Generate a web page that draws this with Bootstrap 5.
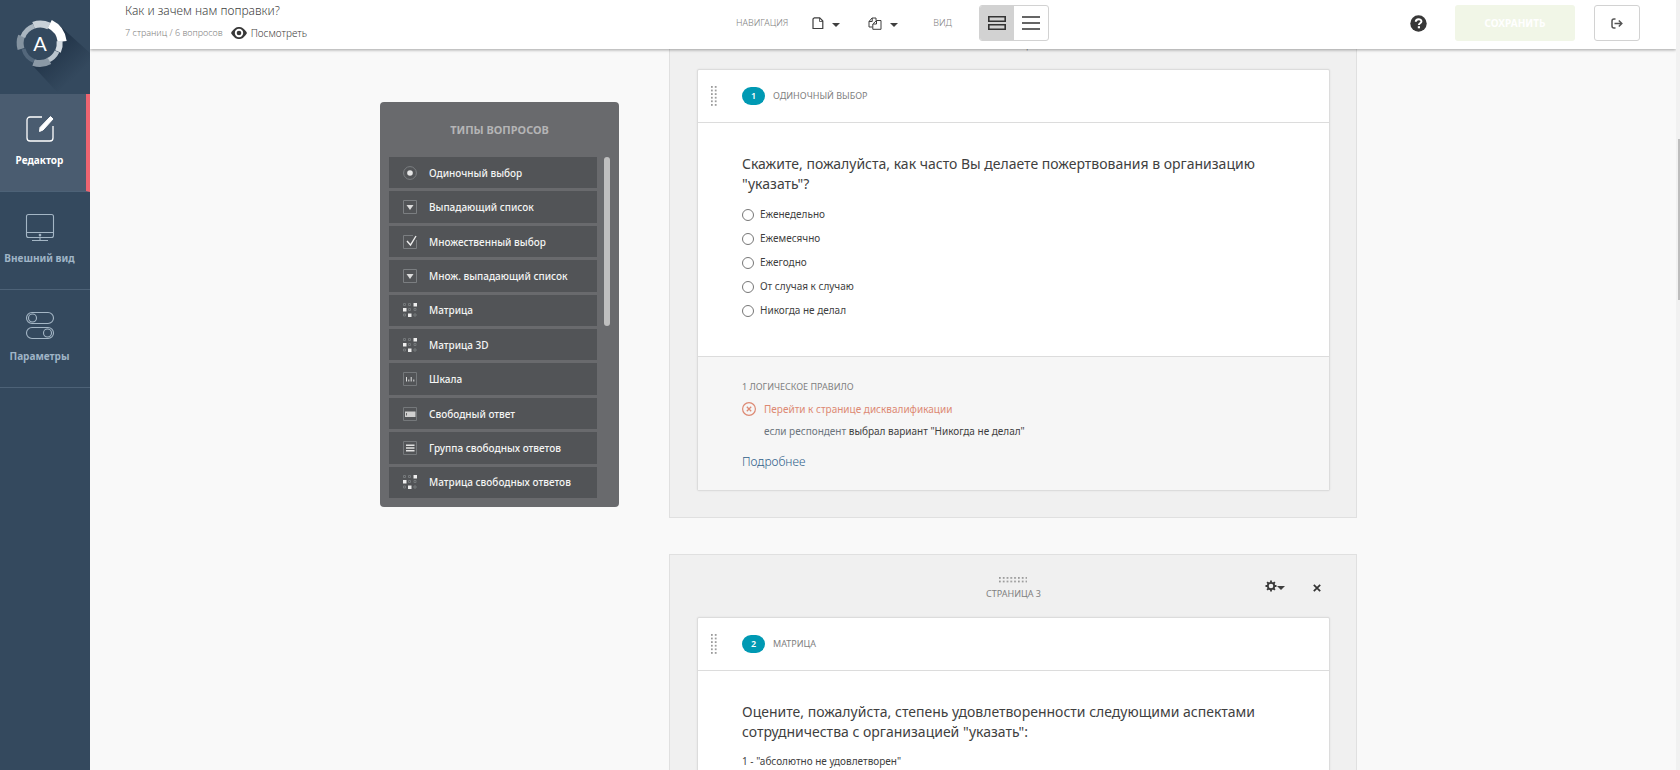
<!DOCTYPE html>
<html lang="ru">
<head>
<meta charset="utf-8">
<meta name="viewport" content="width=device-width, initial-scale=1">
<title>Как и зачем нам поправки?</title>
<link href="https://cdn.jsdelivr.net/npm/bootstrap@5.3.0/dist/css/bootstrap.min.css" rel="stylesheet">
<script src="https://cdn.jsdelivr.net/npm/bootstrap@5.3.0/dist/js/bootstrap.bundle.min.js"></script>
<style>
  :root { --ink: #3f3f3f; --muted: #808080; --navy: #34495e; --edge: #dcdcdc; }
  body { font-family: "Noto Sans", "Open Sans", sans-serif; font-size: 10px; line-height: 14px; color: var(--ink); background: #f9f9f9; }
  svg { display: block; flex-shrink: 0; }
  .caps { font-size: 9px; color: var(--muted); }

  /* sidebar */
  .sidebar { width: 90px; background: var(--navy); }
  .brand { height: 94px; }
  .side-link { height: 98px; padding: 21px 11px 0 0; color: #9fb4c6; font-weight: 700; border-bottom: 1px solid #4d6277; }
  .side-link svg { margin-bottom: 8px; }
  .side-link.active { color: #fff; background: #4a5c70; border-right: 4px solid #ee6470; padding-right: 7px; }

  /* top bar */
  .topbar { display: grid; grid-template-columns: 1fr auto 1fr; height: 49px; padding: 0 36px 3px 35px; background: #fff; box-shadow: 0 1px 3px rgba(0,0,0,.35); z-index: 5; }
  .doc-title { font-size: 12px; font-weight: 300; line-height: 22px; margin: 0 0 4px; }
  .preview { color: var(--ink); font-weight: 300; }
  .tools { padding-left: 20px; }
  .icon-btn { background: none; border: 0; padding: 0; color: var(--ink); }
  .caret-down { width: 7px; border: solid transparent; border-width: 4px 4px 0; border-top-color: currentColor; }
  .view-label { margin: 0 27px 0 35px; }
  .view-toggle { border: 1px solid #d2d2d2; border-radius: 3px; overflow: hidden; }
  .view-toggle .icon-btn { width: 34px; height: 34px; }
  .view-toggle .icon-btn.active { background: #d2d2d2; }
  .save-btn { width: 120px; height: 36px; margin-right: 19px; font-size: 10px; font-weight: 700; border: 0; border-radius: 3px; --bs-btn-color: #fff; --bs-btn-bg: #f1f6e7; --bs-btn-disabled-color: #fff; --bs-btn-disabled-bg: #f1f6e7; --bs-btn-disabled-opacity: 1; }
  .exit-btn { width: 46px; height: 36px; border: 1px solid #d2d2d2; border-radius: 3px; background: #fff; }

  /* workspace */
  .workspace { width: 977px; max-width: 100%; margin-right: 319px; margin-left: auto; }
  .palette { width: 239px; height: 405px; margin-top: 53px; padding: 0 9px 9px; background: #696a6d; border-radius: 4px; color: #fff; }
  .palette h2 { height: 55px; line-height: 55px; font-size: 11px; font-weight: 700; color: #b4b4b5; margin: 0; }
  .type-list { height: 341px; overflow: hidden; flex-grow: 1; gap: 3px; }
  .type-item { flex: 1 0 0; background: #525457; border: 0; color: #f4f4f4; font-weight: 500; text-align: left; padding: 0 0 0 13px; gap: 11px; }
  .thumb { width: 6px; height: 169px; border-radius: 3px; background: #bfbfbf; margin-left: 7px; }

  /* survey pages */
  .survey { width: 688px; }
  .survey-page { background: #f0f0f0; border: 1px solid #e0e0e0; padding: 0 26px 26px 27px; margin-bottom: 36px; }
  .survey-page:first-child { margin-top: -43px; }
  .page-head { display: grid; grid-template-columns: 1fr auto 1fr; height: 62px; padding: 22px 9px 0; }
  .page-actions { padding-top: 3px; }
  .question { background: #fff; border: 1px solid var(--edge); border-radius: 2px; box-shadow: 0 0 2px rgba(0,0,0,.08); }
  .question-head { height: 53px; padding: 0 13px; border-bottom: 1px solid var(--edge); }
  .number-pill { width: 23px; height: 18px; line-height: 18px; margin-left: 25px; margin-right: 8px; border-radius: 9px; background: #0099b3; color: #fff; font-size: 9px; font-weight: 600; text-align: center; }
  .question-body { padding: 31px 44px 0; }
  .question-title { font-size: 14px; line-height: 20px; font-weight: 400; margin: 0 0 8px; }
  .choice { height: 24px; gap: 6px; }
  .choice input { appearance: none; width: 12px; height: 12px; margin: 2px 0 0; border: 1px solid #777; border-radius: 50%; background: #fff; }
  .rules { background: #f6f6f6; border-top: 1px solid var(--edge); padding: 23px 44px 20px; margin-top: 34px; }
  .warn { color: #dd8973; }
  .more { font-size: 12px; line-height: 16px; font-weight: 300; color: #2f5f8a; }

  .scroll-rail { width: 4px; padding-top: 139px; background: #f1f1f1; }
  .scroll-rail div { height: 161px; margin-left: 2px; background: #bdbdbd; }
</style>
</head>
<body>
<svg class="position-absolute" width="0" height="0" aria-hidden="true">
  <symbol id="i-radio" viewBox="0 0 14 14"><circle cx="7" cy="7" r="6.4" fill="none" stroke="#7b7e81"/><circle cx="7" cy="7" r="2.8" fill="#e6e6e6"/></symbol>
  <symbol id="i-drop" viewBox="0 0 14 14"><path d="M.5.5h13v13H.5z" fill="none" stroke="#7b7e81"/><path d="M3.5 5h7L7 10z" fill="#dcdcdc"/></symbol>
  <symbol id="i-check" viewBox="0 0 14 14"><path d="M10 .5H.5v13h13V5" fill="none" stroke="#7b7e81"/><path d="M4 6l3.500 4L13 1" fill="none" stroke="#eee" stroke-width="1.400"/></symbol>
  <symbol id="i-matrix" viewBox="0 0 14 14"><path d="M.5.5h2v2h-2zM5.500.5h2v2h-2zM5.500 5.500h2v2h-2zM11 5.500h2v2h-2zM.5 11h2v2h-2zM11 11h2v2h-2z" fill="none" stroke="#75787b"/><path d="M10.500 0H14v3.500h-3.500zM0 5h3.500v3.500H0zM5 10.500h3.500V14H5z" fill="#eee"/></symbol>
  <symbol id="i-scale" viewBox="0 0 14 14"><path d="M.5.5h13v13H.5z" fill="none" stroke="#75787b"/><path d="M3.500 5v4.500M5.800 7.500v2M8.200 5v4.500M10.800 7.500v2" stroke="#ddd"/></symbol>
  <symbol id="i-field" viewBox="0 0 14 14"><path d="M.5.5h13v13H.5z" fill="none" stroke="#75787b"/><path d="M2 4.500h10.500v5.500H2z" fill="#cfcfcf"/><path d="M3.500 6v2.500" stroke="#666"/></symbol>
  <symbol id="i-lines" viewBox="0 0 14 14"><path d="M.5.5h13v13H.5z" fill="none" stroke="#75787b"/><path d="M3 4.200h8.500M3 7h8.500M3 9.800h8.500" stroke="#e2e2e2" stroke-width="1.600"/></symbol>
  <pattern id="dots" width="3.8" height="3.6" patternUnits="userSpaceOnUse"><path d="M0 0h1.700v1.700H0z" fill="#999"/></pattern>
</svg>

<div class="d-flex vh-100 overflow-hidden">
  <nav class="sidebar flex-shrink-0" aria-label="Разделы">
    <a class="brand d-block" href="#" aria-label="На главную">
      <svg width="90" height="93" viewBox="0 0 90 93">
        <defs><linearGradient id="shade" x1="40" y1="44" x2="72" y2="80" gradientUnits="userSpaceOnUse"><stop offset="0" stop-color="#1e3044"/><stop offset="1" stop-color="#34495e"/></linearGradient></defs>
        <path d="M60 26l30 27v40H58L33 66z" fill="url(#shade)"/>
        <circle cx="40" cy="44" r="18" fill="#34495e"/>
        <g fill="none">
          <path d="M33.500 25.200A20 20 0 0 1 49 26" stroke="#c9d1d8" stroke-width="7"/>
          <path d="M49.800 24A22.300 22.300 0 0 1 62.200 41.500" stroke="#fff" stroke-width="9"/>
          <path d="M59.600 41A19.500 19.500 0 0 1 58 51.500" stroke="#d5dce2" stroke-width="6"/>
          <path d="M57 51.500A18 18 0 0 1 47.500 60.500" stroke="#b9c4cd" stroke-width="5"/>
          <path d="M49.500 61A20 20 0 0 1 33.500 62.500" stroke="#8b99a6" stroke-width="7"/>
          <path d="M34 61A18 18 0 0 1 23.500 49" stroke="#53677b" stroke-width="4"/>
          <path d="M21 49A20 20 0 0 1 21.500 36" stroke="#8493a0" stroke-width="7"/>
          <path d="M22.800 37A18.500 18.500 0 0 1 34 26.200" stroke="#aab6c0" stroke-width="5"/>
        </g>
        <text x="40" y="51" text-anchor="middle" font-family="Lato, sans-serif" font-size="20" fill="#fff">A</text>
      </svg>
    </a>
    <a class="side-link active d-flex flex-column align-items-center text-decoration-none" href="#">
      <svg width="30" height="30" viewBox="0 0 30 30"><path d="M17 2H5a3 3 0 0 0-3 3v18a3 3 0 0 0 3 3h20a3 3 0 0 0 3-3V11" fill="none" stroke="#fff" stroke-width="1.300"/><path d="M15 12.500L25.500 1.500l2.500 2.500L18 15l-3.500 1.500z" fill="#fff" stroke="#fff" stroke-linejoin="round"/></svg>
      Редактор
    </a>
    <a class="side-link d-flex flex-column align-items-center text-decoration-none text-nowrap" href="#">
      <svg width="30" height="30" viewBox="0 0 30 30"><g fill="none" stroke="#a4b6c5" stroke-width="1.100"><rect x="1.500" y="1.500" width="27" height="23" rx="2"/><path d="M1.500 19.500h27M15 23.500v3.500M7 27.500h16"/></g><circle cx="15" cy="22" r="1.300" fill="#a4b6c5"/></svg>
      Внешний вид
    </a>
    <a class="side-link d-flex flex-column align-items-center text-decoration-none" href="#">
      <svg width="30" height="30" viewBox="0 0 30 30"><g fill="none" stroke="#a4b6c5" stroke-width="1.100"><rect x="1.500" y="1.500" width="27" height="11" rx="5.500"/><circle cx="7.500" cy="7" r="4"/><rect x="1.500" y="16.500" width="27" height="11" rx="5.500"/><circle cx="22.500" cy="22" r="4"/></g></svg>
      Параметры
    </a>
  </nav>

  <div class="d-flex flex-column flex-grow-1 overflow-hidden">
    <header class="topbar position-relative flex-shrink-0">
      <div>
        <h1 class="doc-title">Как и зачем нам поправки?</h1>
        <div class="d-flex align-items-center">
          <span class="caps fw-light">7 страниц / 6 вопросов</span>
          <a class="preview d-flex align-items-center text-decoration-none ms-1" href="#">
            <svg class="mx-1" width="16" height="14" viewBox="0 0 16 14"><path d="M0 7C3 2 5.500 1 8 1s5 1 8 6c-3 5-5.500 6-8 6S3 12 0 7z" fill="#383838"/><circle cx="8" cy="7" r="4.200" fill="#fff"/><circle cx="8" cy="7" r="2.300" fill="#383838"/></svg>
            Посмотреть
          </a>
        </div>
      </div>
      <div class="tools d-flex align-items-center">
        <span class="caps fw-light">НАВИГАЦИЯ</span>
        <button class="icon-btn d-flex align-items-center ms-4" aria-label="Страница">
          <svg width="12" height="13" viewBox="0 0 12 13"><path d="M2.200.8h5.600L10.800 4v7.500H1V2z" fill="none" stroke="#3f3f3f" stroke-width="1.200" stroke-linejoin="round"/><path d="M7.500 1v3.500H11" fill="none" stroke="#3f3f3f" stroke-width=".8"/></svg>
          <span class="caret-down ms-2 mt-1"></span>
        </button>
        <button class="icon-btn d-flex align-items-center ms-4" aria-label="Копировать">
          <svg class="ms-1" width="14" height="13" viewBox="0 0 14 13"><g fill="none" stroke="#3f3f3f" stroke-linejoin="round"><path d="M4.500 10H1V4.500L4 1h4v2.500"/><path d="M4.200 1v3.500H1"/><path d="M4.800 12.300V7L8.500 3.500H13v8.800z"/><path d="M8.500 3.500V7H5"/></g></svg>
          <span class="caret-down ms-2 mt-1"></span>
        </button>
        <span class="caps fw-light view-label">ВИД</span>
        <div class="view-toggle d-flex" role="group" aria-label="Вид">
          <button class="icon-btn active d-flex align-items-center justify-content-center" aria-label="Подробный"><svg width="18" height="14" viewBox="0 0 18 14"><path d="M.8.8h16.400v4.400H.8zM.8 8.800h16.400v4.400H.8z" fill="none" stroke="#333" stroke-width="1.600"/></svg></button>
          <button class="icon-btn d-flex align-items-center justify-content-center" aria-label="Список"><svg width="18" height="14" viewBox="0 0 18 14"><path d="M0 1h18M0 7h18M0 13h18" stroke="#333" stroke-width="1.600"/></svg></button>
        </div>
      </div>
      <div class="d-flex align-items-center justify-content-end">
        <button class="icon-btn me-4" aria-label="Помощь"><svg width="17" height="17" viewBox="0 0 17 17"><circle cx="8.500" cy="8.500" r="8.200" fill="#383838"/><path d="M5.800 6.800c0-3.500 5.600-3.300 5.600-.4 0 1.800-2.500 1.900-2.500 3.600" fill="none" stroke="#fff" stroke-width="2"/><path d="M7.800 11.200h2.200v2.100H7.800z" fill="#fff"/></svg></button>
        <button class="btn save-btn p-0 ms-1" disabled>СОХРАНИТЬ</button>
        <button class="exit-btn d-flex align-items-center justify-content-center p-0" aria-label="Выход"><svg width="12" height="11" viewBox="0 0 12 11"><path d="M4.500 1H3a2 2 0 0 0-2 2v5a2 2 0 0 0 2 2h1.500" fill="none" stroke="#555" stroke-width="1.500"/><path d="M3.500 5.500h7M7.800 2.500l3 3-3 3" fill="none" stroke="#555" stroke-width="1.500"/></svg></button>
      </div>
    </header>

    <main class="flex-grow-1 overflow-hidden">
      <div class="workspace d-flex justify-content-between align-items-start">
        <aside class="palette flex-shrink-0">
          <h2 class="text-center">ТИПЫ ВОПРОСОВ</h2>
          <div class="d-flex">
            <div class="type-list d-flex flex-column">
              <button class="type-item d-flex align-items-center"><svg width="16" height="14"><use href="#i-radio"/></svg>Одиночный выбор</button>
              <button class="type-item d-flex align-items-center"><svg width="16" height="14"><use href="#i-drop"/></svg>Выпадающий список</button>
              <button class="type-item d-flex align-items-center"><svg width="16" height="14"><use href="#i-check"/></svg>Множественный выбор</button>
              <button class="type-item d-flex align-items-center"><svg width="16" height="14"><use href="#i-drop"/></svg>Множ. выпадающий список</button>
              <button class="type-item d-flex align-items-center"><svg width="16" height="14"><use href="#i-matrix"/></svg>Матрица</button>
              <button class="type-item d-flex align-items-center"><svg width="16" height="14"><use href="#i-matrix"/></svg>Матрица 3D</button>
              <button class="type-item d-flex align-items-center"><svg width="16" height="14"><use href="#i-scale"/></svg>Шкала</button>
              <button class="type-item d-flex align-items-center"><svg width="16" height="14"><use href="#i-field"/></svg>Свободный ответ</button>
              <button class="type-item d-flex align-items-center"><svg width="16" height="14"><use href="#i-lines"/></svg>Группа свободных ответов</button>
              <button class="type-item d-flex align-items-center"><svg width="16" height="14"><use href="#i-matrix"/></svg>Матрица свободных ответов</button>
            </div>
            <div class="thumb flex-shrink-0"></div>
          </div>
        </aside>

        <div class="survey flex-shrink-0">
          <section class="survey-page">
            <div class="page-head">
              <span></span>
              <div class="caps d-flex flex-column align-items-center">
                <svg class="mb-1" width="28" height="6"><rect width="28" height="6" fill="url(#dots)"/></svg>
                СТРАНИЦА 2
              </div>
            </div>
            <article class="question">
              <header class="question-head d-flex align-items-center">
                <svg width="6" height="20"><rect width="6" height="20" fill="url(#dots)"/></svg>
                <span class="number-pill">1</span><span class="caps">ОДИНОЧНЫЙ ВЫБОР</span>
              </header>
              <div class="question-body">
                <h3 class="question-title">Скажите, пожалуйста, как часто Вы делаете пожертвования в организацию "указать"?</h3>
                <label class="choice d-flex align-items-center"><input type="radio" name="freq">Еженедельно</label>
                <label class="choice d-flex align-items-center"><input type="radio" name="freq">Ежемесячно</label>
                <label class="choice d-flex align-items-center"><input type="radio" name="freq">Ежегодно</label>
                <label class="choice d-flex align-items-center"><input type="radio" name="freq">От случая к случаю</label>
                <label class="choice d-flex align-items-center"><input type="radio" name="freq">Никогда не делал</label>
              </div>
              <footer class="rules">
                <p class="caps mb-2">1 ЛОГИЧЕСКОЕ ПРАВИЛО</p>
                <div class="d-flex gap-2">
                  <svg width="14" height="14" viewBox="0 0 14 14"><circle cx="7" cy="7" r="6.400" fill="none" stroke="#dd8973" stroke-width="1.200"/><path d="M4.800 4.800l4.400 4.400M9.200 4.800L4.800 9.200" stroke="#dd8973" stroke-width="1.300"/></svg>
                  <div>
                    <p class="warn mb-2">Перейти к странице дисквалификации</p>
                    <p class="mb-3"><span class="text-secondary">если респондент</span> выбрал вариант "Никогда не делал"</p>
                  </div>
                </div>
                <a class="more text-decoration-none" href="#">Подробнее</a>
              </footer>
            </article>
          </section>

          <section class="survey-page">
            <div class="page-head">
              <span></span>
              <div class="caps d-flex flex-column align-items-center">
                <svg class="mb-1" width="28" height="6"><rect width="28" height="6" fill="url(#dots)"/></svg>
                СТРАНИЦА 3
              </div>
              <div class="page-actions d-flex align-items-start justify-content-end">
                <button class="icon-btn d-flex align-items-center me-4" aria-label="Настройки страницы">
                  <svg width="12" height="12" viewBox="0 0 12 12"><circle cx="6" cy="6" r="3.200" fill="none" stroke="#3a3a3a" stroke-width="1.800"/><path d="M6 .5v2M6 9.500v2M.5 6h2M9.500 6h2M2.100 2.100l1.400 1.400M8.500 8.500l1.400 1.400M2.100 9.900l1.400-1.400M8.500 3.500l1.400-1.400" stroke="#3a3a3a" stroke-width="1.800"/></svg>
                  <span class="caret-down mt-1"></span>
                </button>
                <button class="icon-btn ms-1 mt-1" aria-label="Удалить страницу"><svg width="8" height="8" viewBox="0 0 8 8"><path d="M.8.8l6.400 6.400M7.200.8L.8 7.200" stroke="#333" stroke-width="1.700"/></svg></button>
              </div>
            </div>
            <article class="question">
              <header class="question-head d-flex align-items-center">
                <svg width="6" height="20"><rect width="6" height="20" fill="url(#dots)"/></svg>
                <span class="number-pill">2</span><span class="caps">МАТРИЦА</span>
              </header>
              <div class="question-body">
                <h3 class="question-title">Оцените, пожалуйста, степень удовлетворенности следующими аспектами сотрудничества с организацией "указать":</h3>
                <p class="pt-1">1 - "абсолютно не удовлетворен"</p>
              </div>
            </article>
          </section>
        </div>
      </div>
    </main>
  </div>
  <div class="scroll-rail flex-shrink-0"><div></div></div>
</div>
</body>
</html>
